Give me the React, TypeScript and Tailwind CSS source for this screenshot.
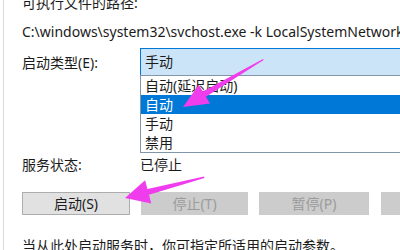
const App = () => {
    return (
        <div
            className="relative w-[400px] h-[250px] overflow-hidden bg-white text-[#1b1b1b] text-[14px]"
            style={{ fontFamily: '"Noto Sans", "Noto Sans CJK SC", sans-serif' }}
        >
            <div className="ml-[3px] h-full border-l border-[#dadada] pl-[18px] flex flex-col">
                <div className="-mt-[7px] h-[20px] leading-[20px] whitespace-nowrap">可执行文件的路径:</div>
                <div className="mt-[9px] h-[20px] leading-[20px] whitespace-nowrap">
                    C:\windows\system32\svchost.exe -k LocalSystemNetworkRestricted
                </div>

                <div className="mt-[6px] flex items-center h-[28px]">
                    <div className="w-[118px] shrink-0 whitespace-nowrap">启动类型(E):</div>
                    <div className="relative h-[28px] w-[300px] shrink-0 bg-[#cce4f7] border border-[#0078d7] pl-[4px] leading-[26px]">
                        手动
                        <div className="absolute left-[-1px] top-[26px] w-[300px] bg-white border border-[#8295aa] z-10">
                            <div className="h-[19px] leading-[19px] pl-[4px]">自动(延迟启动)</div>
                            <div className="h-[19px] leading-[19px] pl-[4px] bg-[#0078d7] text-white">自动</div>
                            <div className="h-[19px] leading-[19px] pl-[4px]">手动</div>
                            <div className="h-[19px] leading-[19px] pl-[4px]">禁用</div>
                        </div>
                    </div>
                </div>

                <div className="mt-[8px] w-[118px] h-px bg-[#c4c4c4]" />

                <div className="mt-[72px] flex h-[18px] leading-[18px]">
                    <div className="w-[118px] shrink-0">服务状态:</div>
                    <div>已停止</div>
                </div>

                <div className="mt-[18px] flex gap-[11px] h-[31px]">
                    <button className="w-[108px] shrink-0 bg-[#e1e1e1] border border-[#adadad]">启动(S)</button>
                    <button className="w-[107px] shrink-0 bg-[#cccccc] text-[#9b9b9b]">停止(T)</button>
                    <button className="w-[110px] shrink-0 bg-[#cccccc] text-[#9b9b9b]">暂停(P)</button>
                    <button className="w-[110px] shrink-0 bg-[#cccccc] text-[#9b9b9b] ml-px">恢复(R)</button>
                </div>

                <div className="mt-[21px] h-[20px] leading-[20px] whitespace-nowrap">
                    当从此处启动服务时，你可指定所适用的启动参数。
                </div>
            </div>

            <svg className="absolute inset-0 z-20" width="400" height="250" viewBox="0 0 400 250">
                <polygon
                    fill="#ef3ded"
                    points="263,59 263.6,60 205.9,96.7 210.1,103.5 183,107 198.7,84.7 202.9,91.5"
                />
                <polygon
                    fill="#ef3ded"
                    points="204,176.5 204.4,178 149,194.7 151.3,203.4 125,198 145.1,180.2 147.4,188.9"
                />
            </svg>
        </div>
    );
};

export default App;
